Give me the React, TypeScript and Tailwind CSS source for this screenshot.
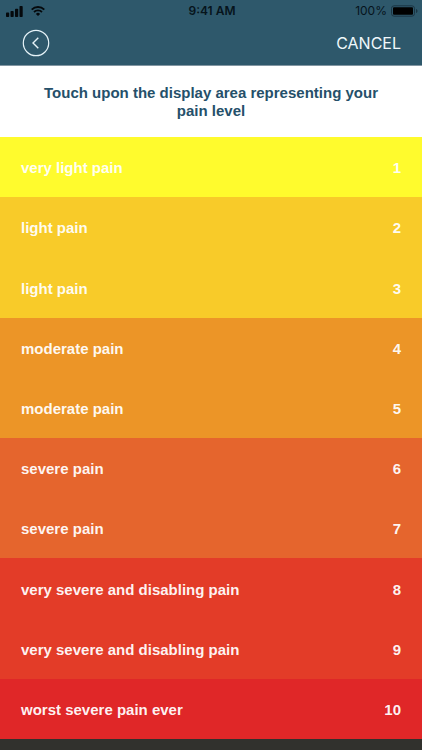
import React from 'react';

interface PainLevel {
  value: number;
  label: string;
  color: string;
}

const levels: PainLevel[] = [
  { value: 1, label: 'very light pain', color: 'bg-[#fffb2d]' },
  { value: 2, label: 'light pain', color: 'bg-[#f8cb29]' },
  { value: 3, label: 'light pain', color: 'bg-[#f8cb29]' },
  { value: 4, label: 'moderate pain', color: 'bg-[#ec9527]' },
  { value: 5, label: 'moderate pain', color: 'bg-[#ec9527]' },
  { value: 6, label: 'severe pain', color: 'bg-[#e5652d]' },
  { value: 7, label: 'severe pain', color: 'bg-[#e5652d]' },
  { value: 8, label: 'very severe and disabling pain', color: 'bg-[#e33c28]' },
  { value: 9, label: 'very severe and disabling pain', color: 'bg-[#e33c28]' },
  { value: 10, label: 'worst severe pain ever', color: 'bg-[#e02728]' },
];

const StatusBar: React.FC = () => (
  <div className="grid h-[22px] grid-cols-3 items-center pl-1.5 pr-1 text-[12px] leading-4 text-[#06141c]">
    <div className="flex items-center gap-2">
      <svg width="17" height="11" viewBox="0 0 17 11" fill="#05090c" aria-hidden="true">
        <rect x="0" y="6.6" width="3.2" height="4.4" rx="0.8" />
        <rect x="4.5" y="5" width="3.2" height="6" rx="0.8" />
        <rect x="9" y="2.7" width="3.2" height="8.3" rx="0.8" />
        <rect x="13.5" y="0" width="3.2" height="11" rx="0.8" />
      </svg>
      <svg width="14" height="10" viewBox="0 0 14 10" fill="none" stroke="#05090c" aria-hidden="true">
        <path d="M0.7 3.6a9 9 0 0 1 12.6 0" strokeWidth="1.9" />
        <path d="M3 6a5.7 5.7 0 0 1 8 0" strokeWidth="1.8" />
        <path d="M7 10 4.9 7.9a3 3 0 0 1 4.2 0Z" fill="#05090c" stroke="none" />
      </svg>
    </div>
    <span className="text-center font-semibold">9:41 AM</span>
    <div className="flex items-center justify-end gap-1">
      <span>100%</span>
      <svg width="27" height="12" viewBox="0 0 27 12" aria-hidden="true">
        <rect x="0.5" y="0.8" width="23" height="10.4" rx="2.6" fill="none" stroke="#1b3544" />
        <rect x="2" y="2.3" width="20" height="7.4" rx="1" fill="#000" />
        <path d="M25 4v4c0.9-0.3 1.5-1.1 1.5-2S25.900 4.300 25 4Z" fill="#1b3544" />
      </svg>
    </div>
  </div>
);

const App: React.FC = () => {
  return (
    <div className="flex min-h-screen flex-col bg-[#31312d] font-['Liberation_Sans',Arial,sans-serif]">
      <header className="h-[66px] border-b border-[#8296a2] bg-[#2e586b] font-[Inter,sans-serif]">
        <StatusBar />
        <nav className="flex h-[42px] items-center justify-between pl-[22px] pr-[21px]">
          <button type="button" aria-label="Back" className="cursor-pointer">
            <svg width="28" height="28" viewBox="0 0 28 28" fill="none" stroke="#e6f3f8" aria-hidden="true">
              <circle cx="14" cy="14" r="12.700" strokeWidth="1.2" />
              <path d="M16.300 8.800 11 14l5.300 5.200" strokeWidth="1.4" />
            </svg>
          </button>
          <button type="button" className="cursor-pointer text-base text-[#f0f8fb]">
            CANCEL
          </button>
        </nav>
      </header>

      <main className="flex flex-1 flex-col">
        <h1 className="bg-white px-8 pb-[17px] pt-[18px] text-center text-[15px] font-bold leading-[18px] text-[#25506a]">
          Touch upon the display area representing your pain level
        </h1>

        <ul className="flex flex-1 flex-col">
          {levels.map((level) => (
            <li key={level.value} className="flex min-h-12 flex-1">
              <button
                type="button"
                className={`flex w-full cursor-pointer items-center justify-between px-[21px] pt-0.5 text-[15px] font-bold leading-[18px] text-white/95 ${level.color}`}
              >
                <span>{level.label}</span>
                <span>{level.value}</span>
              </button>
            </li>
          ))}
        </ul>
      </main>

      <footer className="h-[11px] bg-[#31312d]" />
    </div>
  );
};

export default App;
